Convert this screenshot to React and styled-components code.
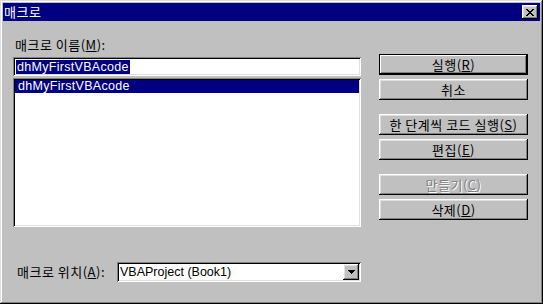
import React from "react";
import styled, { createGlobalStyle, css } from "styled-components";

const GlobalStyle = createGlobalStyle`
  html, body {
    margin: 0;
    padding: 0;
    background: #c0c0c0;
  }
  body {
    font-family: "Liberation Sans", "Noto Sans CJK KR", sans-serif;
    font-size: 12px;
    color: #000;
  }
`;

// classic win95 bevels
const raised = css`
  box-shadow: inset -1px -1px 0 #000, inset 1px 1px 0 #fff,
    inset -2px -2px 0 #808080, inset 2px 2px 0 #dfdfdf;
`;

const sunken = css`
  box-shadow: inset 1px 1px 0 #808080, inset -1px -1px 0 #fff,
    inset 2px 2px 0 #000, inset -2px -2px 0 #dfdfdf;
`;

const hangul = css`
  font-family: "Noto Sans CJK KR", sans-serif;
  font-size: 13px;
  letter-spacing: 0.5px;
`;

const latin = css`
  font-family: "Liberation Sans", sans-serif;
  font-size: 12.5px;
  letter-spacing: 0.3px;
`;

const buttons = [
  { label: "실행", key: "R", isDefault: true, gap: 0 },
  { label: "취소", gap: 4 },
  { label: "한 단계씩 코드 실행", key: "S", gap: 14 },
  { label: "편집", key: "E", gap: 4 },
  { label: "만들기", key: "C", disabled: true, gap: 14 },
  { label: "삭제", key: "D", gap: 4 },
];

const App = () => {
  return (
    <>
      <GlobalStyle />
      <Window>
        <TitleBar>
          <Title>매크로</Title>
          <CloseButton>
            <svg width="8" height="7" viewBox="0 0 8 7">
              <path
                d="M0 0h2v1h1v1h2V1h1V0h2v1H7v1H6v1H5v1h1v1h1v1h1v1H6V6H5V5H3v1H2v1H0V6h1V5h1V4h1V3H2V2H1V1H0z"
                fill="#000"
              />
            </svg>
          </CloseButton>
        </TitleBar>
        <Body>
          <LeftColumn>
            <FieldLabel>
              매크로 이름(<u>M</u>):
            </FieldLabel>
            <NameInput>
              <Highlight>dhMyFirstVBAcode</Highlight>
            </NameInput>
            <MacroList>
              <ListItem $selected>dhMyFirstVBAcode</ListItem>
            </MacroList>
            <LocationRow>
              <FieldLabel>
                매크로 위치(<u>A</u>):
              </FieldLabel>
              <Combo>
                <ComboText>VBAProject (Book1)</ComboText>
                <DropButton>
                  <svg width="7" height="4" viewBox="0 0 7 4">
                    <path d="M0 0h7v1H6v1H5v1H4v1H3V3H2V2H1V1H0z" fill="#000" />
                  </svg>
                </DropButton>
              </Combo>
            </LocationRow>
          </LeftColumn>
          <ButtonColumn>
            {buttons.map((b) => (
              <DialogButton
                key={b.label}
                $default={b.isDefault}
                $disabled={b.disabled}
                $gap={b.gap}
              >
                {b.label}
                {b.key && (
                  <>
                    (<u>{b.key}</u>)
                  </>
                )}
              </DialogButton>
            ))}
          </ButtonColumn>
        </Body>
      </Window>
    </>
  );
};

export default App;

const Window = styled.div`
  width: 543px;
  height: 304px;
  box-sizing: border-box;
  padding: 3px;
  background: #c0c0c0;
  display: flex;
  flex-direction: column;
  box-shadow: inset -1px -1px 0 #000, inset 1px 1px 0 #dfdfdf,
    inset -2px -2px 0 #808080, inset 2px 2px 0 #fff;
`;

const TitleBar = styled.div`
  height: 18px;
  background: #000080;
  display: flex;
  align-items: center;
  justify-content: space-between;
  padding: 0 2px 0 1px;
`;

const Title = styled.span`
  ${hangul}
  color: #fff;
  line-height: 14px;
`;

const CloseButton = styled.div`
  width: 16px;
  height: 14px;
  background: #c0c0c0;
  display: flex;
  align-items: center;
  justify-content: center;
  ${raised}
`;

const Body = styled.div`
  flex: 1;
  display: flex;
  padding: 0 0 0 10px;
`;

const LeftColumn = styled.div`
  width: 348px;
  display: flex;
  flex-direction: column;
  padding-top: 17px;
`;

const FieldLabel = styled.div`
  ${hangul}
  line-height: 14px;
  padding-left: 2px;
  white-space: nowrap;

  u {
    text-underline-offset: 1px;
  }
`;

const NameInput = styled.div`
  margin-top: 5px;
  height: 19px;
  background: #fff;
  display: flex;
  align-items: center;
  padding-left: 3px;
  ${sunken}
`;

const Highlight = styled.span`
  ${latin}
  background: #000080;
  color: #fff;
  line-height: 14px;
  padding: 0 1px;
`;

const MacroList = styled.div`
  margin-top: 2px;
  height: 149px;
  box-sizing: border-box;
  padding: 2px;
  background: #fff;
  ${sunken}
`;

const ListItem = styled.div`
  ${latin}
  height: 13px;
  line-height: 13px;
  padding-left: 3px;
  background: ${(p) => (p.$selected ? "#000080" : "transparent")};
  color: ${(p) => (p.$selected ? "#fff" : "#000")};
`;

const LocationRow = styled.div`
  margin-top: 35px;
  display: flex;
  align-items: center;
  padding-left: 2px;
`;

const Combo = styled.div`
  margin-left: auto;
  width: 244px;
  height: 20px;
  box-sizing: border-box;
  background: #fff;
  display: flex;
  align-items: center;
  padding: 2px;
  ${sunken}
`;

const ComboText = styled.span`
  flex: 1;
  padding-left: 1px;
  font-size: 12.5px;
  line-height: 14px;
`;

const DropButton = styled.div`
  width: 16px;
  height: 16px;
  background: #c0c0c0;
  display: flex;
  align-items: center;
  justify-content: center;
  ${raised}
`;

const ButtonColumn = styled.div`
  width: 149px;
  margin-left: 18px;
  padding-top: 33px;
  display: flex;
  flex-direction: column;
`;

const DialogButton = styled.div`
  ${hangul}
  height: 21px;
  box-sizing: border-box;
  margin-top: ${(p) => p.$gap}px;
  display: flex;
  align-items: center;
  justify-content: center;
  background: #c0c0c0;
  ${(p) =>
    p.$default
      ? css`
          box-shadow: inset 0 0 0 1px #000, inset -2px -2px 0 #000,
            inset 2px 2px 0 #fff, inset -3px -3px 0 #808080;
        `
      : raised}
  color: ${(p) => (p.$disabled ? "#808080" : "#000")};
  text-shadow: ${(p) => (p.$disabled ? "1px 1px 0 #fff" : "none")};

  u {
    text-underline-offset: 1px;
  }
`;
